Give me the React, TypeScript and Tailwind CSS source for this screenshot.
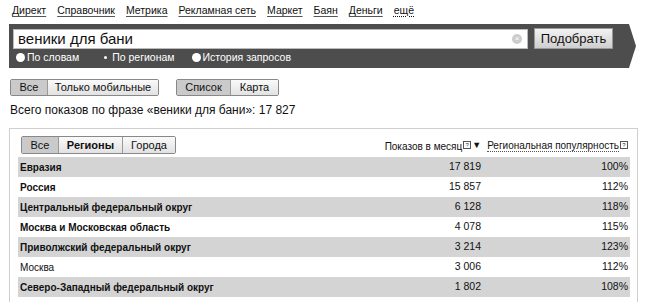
import React from "react";

const navLinks = ["Директ", "Справочник", "Метрика", "Рекламная сеть", "Маркет", "Баян", "Деньги"];

const rows: { name: string; bold: boolean; count: string; pct: string }[] = [
  { name: "Евразия", bold: true, count: "17 819", pct: "100%" },
  { name: "Россия", bold: true, count: "15 857", pct: "112%" },
  { name: "Центральный федеральный округ", bold: true, count: "6 128", pct: "118%" },
  { name: "Москва и Московская область", bold: true, count: "4 078", pct: "115%" },
  { name: "Приволжский федеральный округ", bold: true, count: "3 214", pct: "123%" },
  { name: "Москва", bold: false, count: "3 006", pct: "112%" },
  { name: "Северо-Западный федеральный округ", bold: true, count: "1 802", pct: "108%" },
];

function Q() {
  return (
    <span className="inline-flex w-[8px] h-[8px] border border-[#555] items-center justify-center text-[6px] leading-none text-[#333] ml-[1px] align-middle relative -top-[1px]">
      ?
    </span>
  );
}

export default function App() {
  return (
    <div
      className="w-[650px] h-[302px] bg-white overflow-hidden text-[#111]"
      style={{ fontFamily: '"Liberation Sans", Arial, sans-serif' }}
    >
      {/* nav */}
      <div className="flex h-[22px] pt-[3px] pl-[12px] text-[10.5px] gap-[11px]">
        {navLinks.map((l) => (
          <span key={l} className="underline underline-offset-[2px] decoration-[#555]">
            {l}
          </span>
        ))}
        <span className="underline decoration-dotted underline-offset-[2px]">ещё</span>
      </div>

      {/* search bar */}
      <div className="flex ml-[9px] mt-[2px] h-[44px]">
        <div className="w-[619px] bg-[#4d4d4d] pl-[4px] pt-[4px] flex flex-col">
          <div className="flex items-center gap-[6px]">
            <div className="w-[515px] h-[20px] bg-white border border-[#bbb] flex items-center pl-[4px] pr-[5px] text-[15px] text-[#111]">
              <span className="flex-1 leading-none">веники для бани</span>
              <span className="w-[10px] h-[10px] rounded-full bg-[#ccc] flex items-center justify-center text-[8px] text-white leading-none">×</span>
            </div>
            <div className="w-[79px] h-[21px] bg-gradient-to-b from-[#f2f2f2] to-[#cfcfcf] border border-[#999] flex items-center justify-center text-[13px] text-[#111]">
              Подобрать
            </div>
          </div>
          <div className="flex items-center text-[10.5px] text-white mt-[1px] pl-[3px]">
            <span className="w-[9px] h-[9px] rounded-full bg-white mr-[2px]" />
            <span>По словам</span>
            <span className="w-[3px] h-[3px] rounded-full bg-white ml-[25px] mr-[5px]" />
            <span>По регионам</span>
            <span className="w-[9px] h-[9px] rounded-full bg-white ml-[17px] mr-[2px]" />
            <span>История запросов</span>
          </div>
        </div>
        <svg width="9" height="44" viewBox="0 0 9 44" className="block">
          <polygon points="0,0 1,0 8,22 1,44 0,44" fill="#4d4d4d" />
        </svg>
      </div>

      {/* filter buttons */}
      <div className="flex ml-[10px] mt-[11px] h-[17px] text-[11px]">
        <div className="flex border border-[#888] rounded-[2px] overflow-hidden">
          <span className="w-[37px] bg-[#cacaca] flex items-center justify-center border-r border-[#999]">Все</span>
          <span className="w-[110px] bg-gradient-to-b from-[#fafafa] to-[#e2e2e2] flex items-center justify-center">Только мобильные</span>
        </div>
        <div className="flex border border-[#888] rounded-[2px] overflow-hidden ml-[17px]">
          <span className="w-[54px] bg-[#cacaca] flex items-center justify-center border-r border-[#999]">Список</span>
          <span className="w-[47px] bg-gradient-to-b from-[#fafafa] to-[#e2e2e2] flex items-center justify-center">Карта</span>
        </div>
      </div>

      <div className="ml-[10px] mt-[6px] text-[12px] leading-[16px]">
        Всего показов по фразе «веники для бани»: 17 827
      </div>

      {/* table panel */}
      <div className="ml-[9px] mt-[10px] w-[629px] border-l border-t border-r border-[#cfcfcf] pl-[8px] pr-[7px] pt-[7px] h-[200px]">
        <div className="flex items-center justify-between h-[18px]">
          <div className="flex h-[18px] border border-[#888] rounded-[2px] overflow-hidden text-[11px] ml-[3px]">
            <span className="w-[37px] bg-[#cacaca] flex items-center justify-center border-r border-[#999]">Все</span>
            <span className="w-[64px] bg-gradient-to-b from-[#fafafa] to-[#e2e2e2] flex items-center justify-center font-bold border-r border-[#999]">Регионы</span>
            <span className="w-[52px] bg-gradient-to-b from-[#fafafa] to-[#e2e2e2] flex items-center justify-center">Города</span>
          </div>
          <div className="flex text-[10px] pt-[2px]">
            <span className="flex items-center">
              Показов в месяц<Q />
              <span className="text-[9px] ml-[1px]">▼</span>
            </span>
            <span className="ml-[6px] flex items-center pr-[2px]">
              <span className="border-b border-dotted border-[#555] leading-[11px]">Региональная популярность</span>
              <Q />
            </span>
          </div>
        </div>
        <div className="mt-[3px]">
          {rows.map((r, i) => (
            <div
              key={r.name}
              className={`flex items-center h-[20px] ${i % 2 === 0 ? "bg-[#d4d4d4]" : "bg-white"}`}
            >
              <span className={`pl-[2px] flex-1 text-[10px] ${r.bold ? "font-bold" : ""}`}>{r.name}</span>
              <span className="w-[60px] text-right mr-[109px] text-[10.5px]">{r.count}</span>
              <span className="w-[40px] text-right pr-[2px] text-[10.5px]">{r.pct}</span>
            </div>
          ))}
        </div>
      </div>
    </div>
  );
}
